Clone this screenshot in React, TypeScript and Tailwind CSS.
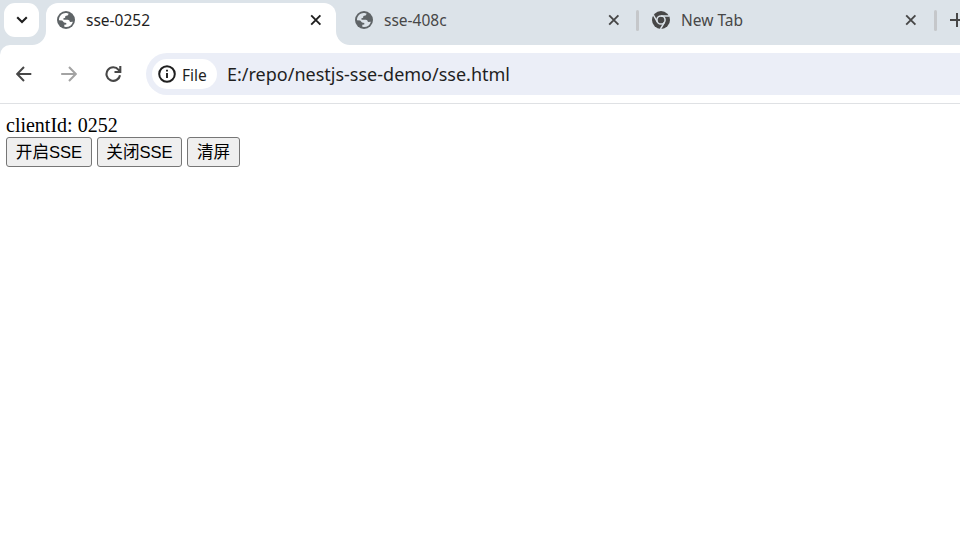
import React from "react";

const UI_FONT = "font-['Noto_Sans','Noto_Sans_CJK_SC',sans-serif]";

function Globe({ land }: { land: string }) {
  return (
    <svg className="size-[18px] shrink-0" viewBox="0 0 18 18">
      <circle cx="9" cy="9" r="9" fill="#5f6467" />
      <path
        d="M2 8.2C2.4 4.6 5.3 2 8.6 1.9C10 1.9 10.9 2.2 11.6 2.5L11 4.3L8.4 4.9L8.1 6.8L6.2 7.6L6.6 8.7H10.6C12.2 8.8 12.9 9.8 12.9 11L15.9 10.7C15.1 14.3 12.3 16.1 9 16.1L7.3 15.8V13.8L9.3 13.4V11.9L7 11.4L5.2 9.4L2 9.2Z"
        fill={land}
      />
    </svg>
  );
}

function ChromeMark() {
  return (
    <svg className="size-[18px] shrink-0" viewBox="0 0 18 18">
      <circle cx="9" cy="9" r="9" fill="#474747" />
      <circle cx="9" cy="9" r="4.1" fill="none" stroke="#dce3e9" strokeWidth="1.5" />
      <path d="M9 4.9H17.2M5.45 11.1L1.4 4M12.55 11.1L8.5 18" stroke="#dce3e9" strokeWidth="1.5" />
    </svg>
  );
}

function Close({ color }: { color: string }) {
  return (
    <svg className="size-[12px] shrink-0" viewBox="0 0 12 12" fill="none" stroke={color} strokeWidth="1.9">
      <path d="M1.2 1.4L10.4 10.6M10.4 1.4L1.2 10.6" />
    </svg>
  );
}

function TabStrip() {
  return (
    <div className="flex h-[45px] bg-[#dce3e9] text-[15.5px] leading-[22px]">
      <div className="relative w-[46px] shrink-0">
        <button className="ml-1 mt-[3px] flex h-[34px] w-[35px] items-center justify-center rounded-[11px] bg-white">
          <svg width="12" height="8" viewBox="0 0 12 8" fill="none" stroke="#1f1f1f" strokeWidth="2.1">
            <path d="M1.2 1.3L6 6L10.8 1.3" />
          </svg>
        </button>
        <svg className="absolute bottom-0 right-0" width="14" height="14" viewBox="0 0 14 14">
          <path d="M14 0V14H0A14 14 0 0 0 14 0Z" fill="white" />
        </svg>
      </div>
      <div className="relative mt-[3px] flex h-[42px] w-[290px] shrink-0 rounded-t-[12px] bg-white pl-[11px] pt-[8px]">
        <Globe land="#ffffff" />
        <span className="-mt-[2px] ml-[11px] w-[224px] shrink-0 text-[#1f1f1f]">sse-0252</span>
        <span className="mt-[3px] shrink-0"><Close color="#1f1f1f" /></span>
        <svg className="absolute -right-[14px] bottom-0" width="14" height="14" viewBox="0 0 14 14">
          <path d="M0 0V14H14A14 14 0 0 1 0 0Z" fill="white" />
        </svg>
      </div>
      <div className="flex w-[300px] shrink-0 pl-[19px] pt-[11px]">
        <Globe land="#dce3e9" />
        <span className="-mt-[2px] ml-[11px] w-[224px] text-[#474747]">sse-408c</span>
        <span className="mt-[3px]"><Close color="#474747" /></span>
      </div>
      <div className="mt-[10px] h-[21px] w-[3px] shrink-0 rounded-full bg-[#c5c7ca]" />
      <div className="flex w-[295px] shrink-0 pl-[13px] pt-[11px]">
        <ChromeMark />
        <span className="-mt-[2px] ml-[11px] w-[224px] text-[#474747]">New Tab</span>
        <span className="mt-[3px]"><Close color="#474747" /></span>
      </div>
      <div className="mt-[10px] h-[21px] w-[3px] shrink-0 rounded-full bg-[#c5c7ca]" />
      <div className="flex flex-1 overflow-hidden pl-[13px] pt-[13px]">
        <svg className="shrink-0" width="14" height="14" viewBox="0 0 14 14" stroke="#474747" strokeWidth="2">
          <path d="M7 0V14M0 7H14" />
        </svg>
      </div>
    </div>
  );
}

function Toolbar() {
  return (
    <div className="bg-[#dce3e9]">
      <div className="flex h-[59px] rounded-tl-[10px] border-b border-[#dfe1e4] bg-white pt-[8px]">
        <div className="flex w-[146px] shrink-0 pl-[16px] pt-[13px]">
          <svg width="16" height="16" viewBox="0 0 16 16" fill="none" stroke="#474747" strokeWidth="2">
            <path d="M15.3 8H1.7M8 1L1.2 8L8 15" />
          </svg>
          <svg className="ml-[29px]" width="16" height="16" viewBox="0 0 16 16" fill="none" stroke="#a3a3a3" strokeWidth="2">
            <path d="M.2 8H14.3M8 1L14.8 8L8 15" />
          </svg>
          <svg className="ml-[28px]" width="17" height="16" viewBox="0 0 17 16" fill="none" stroke="#474747" strokeWidth="2.1">
            <path d="M15 9.2A6.8 6.8 0 1 1 13.6 3.8L15 5.5M15.3 0V6H9.5" />
          </svg>
        </div>
        <div className="flex h-[42px] flex-1 rounded-l-full bg-[#ebeef7] pl-[6px] pt-[6px]">
          <div className="flex h-[30px] w-[65px] shrink-0 rounded-full bg-white pl-[6px] pt-[6px]">
            <svg className="shrink-0" width="18" height="18" viewBox="0 0 18 18">
              <circle cx="9" cy="9" r="7.8" fill="none" stroke="#1f1f1f" strokeWidth="2" />
              <path d="M9 8V13M9 4.8V6.6" stroke="#1f1f1f" strokeWidth="1.9" />
            </svg>
            <span className="-mt-px ml-[6px] text-[15.5px] leading-[22px] text-[#1f1f1f]">File</span>
          </div>
          <span className="ml-[10px] whitespace-nowrap text-[18px] leading-[30px] text-[#1f1f1f]">
            E:/repo/nestjs-sse-demo/sse.html
          </span>
        </div>
      </div>
    </div>
  );
}

const BUTTON =
  "h-[30px] shrink-0 rounded-[3px] border border-[#767676] bg-[#efefef] pt-px text-center text-[16.6px] leading-[28px] whitespace-nowrap font-['Liberation_Sans','Noto_Sans_CJK_SC',sans-serif]";

export default function App() {
  return (
    <div className={`h-[540px] w-[960px] overflow-hidden bg-white ${UI_FONT}`}>
      <TabStrip />
      <Toolbar />
      <main className="pl-[6px] pt-[11px] text-black">
        <p className="h-[22px] font-['Liberation_Serif',serif] text-[20px] leading-[21px]">clientId: 0252</p>
        <div className="flex gap-[5px]">
          <button className={`${BUTTON} w-[86px]`}>开启SSE</button>
          <button className={`${BUTTON} w-[85px]`}>关闭SSE</button>
          <button className={`${BUTTON} w-[53px]`}>清屏</button>
        </div>
      </main>
    </div>
  );
}
